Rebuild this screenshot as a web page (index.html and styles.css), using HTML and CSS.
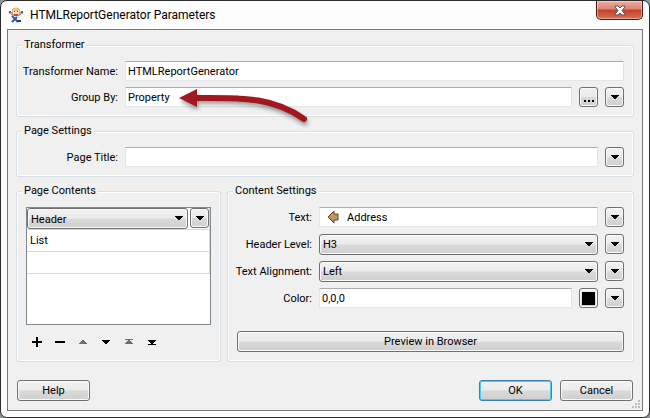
FILE: index.html
```
<!DOCTYPE html>
<html lang="en">
<head>
    <meta charset="UTF-8">
    <title>HTMLReportGenerator Parameters</title>
    <link rel="stylesheet" href="styles.css">
</head>
<body>

<!-- shared arrow shapes -->
<svg class="defs" width="0" height="0">
    <symbol id="down" viewBox="0 0 8 4"><path d="M0 0h8v1h-1v1h-1v1h-1v1h-2v-1h-1v-1h-1v-1h-1z"/></symbol>
</svg>

<form class="window">
    <header class="titlebar">
        <svg class="logo" width="16" height="16" viewBox="0 0 16 16">
            <path d="M1 5l3 2 2 2M15 5l-3 2-2 2" fill="none" stroke="#a39a96" stroke-width="2"/>
            <path d="M1 4h2v2H1zM13 4h2v2h-2z" fill="#6b5f5c"/>
            <circle cx="8" cy="5" r="4" fill="#f6e3c8" stroke="#b5a08c"/>
            <path d="M4 4c1-4 7-4 8 0z" fill="#f0c869"/>
            <path d="M6 4h1v1H6zM9 4h1v1H9z" fill="#444"/>
            <path d="M6 7h4v2H6z" fill="#d8432e"/>
            <path d="M4 9l6 6M9 10l-5 5" fill="none" stroke="#2a5cb8" stroke-width="2"/>
            <path d="M9 13h4v2H9z" fill="#1f3f86"/>
        </svg>
        <h1>HTMLReportGenerator Parameters</h1>
        <button type="button" class="close" aria-label="Close">
            <svg width="12" height="11" viewBox="0 0 12 11"><path d="M1 1h3l2 2 2-2h3v1L8 5.500 11 9v1H8L6 8l-2 2H1V9l3-3.500L1 2z" fill="#fff" stroke="#54545f"/></svg>
        </button>
    </header>

    <main class="content">
        <fieldset>
            <legend>Transformer</legend>
            <div class="row">
                <label for="name">Transformer Name:</label>
                <input type="text" id="name" value="HTMLReportGenerator">
            </div>
            <div class="row">
                <label for="group">Group By:</label>
                <input type="text" id="group" value="Property">
                <button type="button" class="tool" aria-label="Browse"><svg width="11" height="13" viewBox="0 0 11 13"><path d="M1 9h2v2H1zM5 9h2v2H5zM9 9h2v2H9z"/></svg></button>
                <button type="button" class="tool" aria-label="Group By options"><svg width="8" height="4"><use href="#down"/></svg></button>
                <svg class="pointer" width="140" height="50" viewBox="0 0 140 50">
                    <path d="M24 17C62 17 94 16 125 38" fill="none" stroke="#a1181f" stroke-width="6" stroke-linecap="round"/>
                    <path d="M0 17L18 8v18z" fill="#a1181f"/>
                    <path d="M16 14h10v6H16z" fill="#a1181f"/>
                </svg>
            </div>
        </fieldset>

        <fieldset>
            <legend>Page Settings</legend>
            <div class="row">
                <label for="title">Page Title:</label>
                <input type="text" id="title">
                <button type="button" class="tool" aria-label="Page Title options"><svg width="8" height="4"><use href="#down"/></svg></button>
            </div>
        </fieldset>

        <div class="columns">
            <fieldset>
                <legend>Page Contents</legend>
                <div class="list">
                    <div class="item current">
                        <span class="select">
                            <select aria-label="Content type"><option>Header</option></select>
                            <svg width="8" height="4"><use href="#down"/></svg>
                        </span>
                        <button type="button" class="tool" aria-label="Content options"><svg width="8" height="4"><use href="#down"/></svg></button>
                    </div>
                    <div class="item">List</div>
                    <div class="item"></div>
                </div>
                <div class="actions">
                    <button type="button" aria-label="Add"><svg width="11" height="11"><path d="M0 5h10v2H0zM4 1h2v10H4z"/></svg></button>
                    <button type="button" aria-label="Remove"><svg width="11" height="11"><path d="M0 5h10v2H0z"/></svg></button>
                    <button type="button" aria-label="Move up" disabled><svg width="11" height="11"><path d="M1 8h8v-1h-1v-1h-1v-1h-1v-1h-2v1h-1v1h-1v1h-1z"/></svg></button>
                    <button type="button" aria-label="Move down"><svg width="11" height="11"><path d="M1 4h8v1h-1v1h-1v1h-1v1h-2v-1h-1v-1h-1v-1h-1z"/></svg></button>
                    <button type="button" aria-label="Move to top" disabled><svg width="11" height="11"><path d="M1 3h8v1H1zM1 8h8v-1h-1v-1h-1v-1h-1v-1h-2v1h-1v1h-1v1h-1z"/></svg></button>
                    <button type="button" aria-label="Move to bottom"><svg width="11" height="11"><path d="M1 4h8v1h-1v1h-1v1h-1v1h-2v-1h-1v-1h-1v-1h-1zM1 8h8v1H1z"/></svg></button>
                </div>
            </fieldset>

            <fieldset class="settings">
                <legend>Content Settings</legend>
                <div class="row">
                    <label for="text">Text:</label>
                    <span class="attribute">
                        <svg width="12" height="14" viewBox="0 0 12 14"><path d="M1 7l6-6v3h4v6H7v3z" fill="#c2935a" stroke="#5b4630"/></svg>
                        <input type="text" id="text" value="Address">
                    </span>
                    <button type="button" class="tool" aria-label="Text options"><svg width="8" height="4"><use href="#down"/></svg></button>
                </div>
                <div class="row">
                    <label for="level">Header Level:</label>
                    <span class="select">
                        <select id="level"><option>H3</option></select>
                        <svg width="8" height="4"><use href="#down"/></svg>
                    </span>
                    <button type="button" class="tool" aria-label="Header Level options"><svg width="8" height="4"><use href="#down"/></svg></button>
                </div>
                <div class="row">
                    <label for="align">Text Alignment:</label>
                    <span class="select">
                        <select id="align"><option>Left</option></select>
                        <svg width="8" height="4"><use href="#down"/></svg>
                    </span>
                    <button type="button" class="tool" aria-label="Text Alignment options"><svg width="8" height="4"><use href="#down"/></svg></button>
                </div>
                <div class="row">
                    <label for="color">Color:</label>
                    <input type="text" id="color" value="0,0,0">
                    <button type="button" class="tool" aria-label="Pick color"><svg width="13" height="13"><path d="M0 0h13v13H0z"/></svg></button>
                    <button type="button" class="tool" aria-label="Color options"><svg width="8" height="4"><use href="#down"/></svg></button>
                </div>
                <button type="button" class="btn preview">Preview in Browser</button>
            </fieldset>
        </div>

        <footer>
            <button type="button" class="btn">Help</button>
            <button type="submit" class="btn ok">OK</button>
            <button type="button" class="btn">Cancel</button>
        </footer>
        <svg class="grip" width="8" height="8"><path d="M6 0h2v2H6zM3 3h2v2H3zM6 3h2v2H6zM0 6h2v2H0zM3 6h2v2H3zM6 6h2v2H6z" fill="#bdbdbd"/></svg>
    </main>
</form>

</body>
</html>
```
FILE: styles.css
```
*{
    box-sizing: border-box;
}
body{
    margin: 0;
    background: #8f9395;
    color: #000;
    font: 11px/14px Roboto, "Liberation Sans", sans-serif;
}
.defs{
    position: absolute;
}
.window{
    padding: 0 6px 6px;
    border: 1px solid #2b2b2b;
    border-radius: 7px;
    background: #fdfdfd;
}
.titlebar{
    display: flex;
    align-items: flex-start;
    height: 28px;
}
.logo{
    margin: 6px 6px 0 1px;
}
h1{
    flex: 1;
    margin: 6px 0 0;
    font: 12px/16px Roboto, "Liberation Sans", sans-serif;
}
.close{
    display: flex;
    align-items: center;
    justify-content: center;
    width: 47px;
    height: 19px;
    padding: 0;
    border: 1px solid #4c1a17;
    border-top: 0;
    border-radius: 0 0 5px 5px;
    background: linear-gradient(#eeb0a2, #dc8370 45%, #c1402a 50%, #d97055);
    box-shadow: inset 0 0 0 1px rgba(255,255,255,0.4);
}
.content{
    position: relative;
    padding: 8px 8px 9px;
    border: 1px solid #777;
    background: #f0f0f0;
}
fieldset{
    min-width: 0;
    margin: 0 0 7px;
    padding: 9px;
    border: 1px solid #d5dfe5;
    border-radius: 3px;
    box-shadow: inset 0 0 0 1px #fff;
}
legend{
    margin-left: -4px;
    padding: 0 2px;
    background: #f0f0f0;
}
.row{
    display: flex;
    position: relative;
    gap: 7px;
    height: 20px;
}
.row + .row{
    margin-top: 6px;
}
label{
    display: flex;
    justify-content: flex-end;
    width: 92px;
    line-height: 22px;
    white-space: nowrap;
}
input{
    flex: 1;
    min-width: 0;
    height: 20px;
    padding: 1px 2px 0;
    border: 1px solid #e2e6ea;
    border-top-color: #abadb3;
    border-radius: 1px;
    background: #fff;
    font: inherit;
}
.tool{
    display: flex;
    flex: none;
    align-items: center;
    justify-content: center;
    width: 19px;
    height: 20px;
    padding: 0;
}
.tool, .btn, select{
    border: 1px solid #707070;
    border-radius: 3px;
    background: linear-gradient(#f2f2f2, #ebebeb 48%, #dadada 52%, #cfcfcf);
    box-shadow: inset 0 0 0 1px #fafafa;
    color: #000;
    font: inherit;
}
.pointer{
    position: absolute;
    top: -6px;
    left: 153px;
    filter: drop-shadow(1px 3px 2px rgba(0,0,0,0.4));
}
.select{
    display: flex;
    flex: 1;
    position: relative;
}
.select svg{
    position: absolute;
    top: 8px;
    right: 5px;
    pointer-events: none;
}
select{
    appearance: none;
    width: 100%;
    height: 21px;
    padding: 0 3px;
}
.columns{
    display: grid;
    grid-template-columns: minmax(205px, 1fr) 2fr;
    gap: 6px;
}
.columns fieldset{
    margin-bottom: 18px;
}
.settings .row{
    height: 21px;
}
.settings label{
    width: 75px;
}
.attribute{
    display: flex;
    flex: 1;
    align-items: center;
    height: 20px;
    padding-left: 7px;
    border: 1px solid #e2e6ea;
    border-top-color: #abadb3;
    background: #fff;
}
.attribute input{
    height: 18px;
    padding-left: 8px;
    border: 0;
}
.list{
    height: 118px;
    border: 1px solid #828790;
    background: #fff;
}
.item{
    height: 22px;
    padding: 0 3px;
    border: solid #d8d8d8;
    border-width: 0 1px 1px 0;
    line-height: 22px;
}
.item.current{
    display: flex;
    gap: 2px;
    padding: 0;
}
.actions{
    display: flex;
    padding: 11px 0 0 6px;
}
.actions button{
    display: flex;
    width: 23px;
    padding: 0;
    border: 0;
    background: none;
}
.actions button:disabled{
    fill: #6d6d6d;
}
.btn{
    width: 73px;
    height: 21px;
    padding: 0;
}
.preview{
    display: block;
    width: 100%;
    margin-top: 22px;
}
footer{
    display: flex;
    gap: 8px;
    padding: 0 1px;
}
.ok{
    margin-left: auto;
    border-color: #3c7fb1;
    box-shadow: inset 0 0 0 1px #46d0f7;
}
.grip{
    position: absolute;
    right: 2px;
    bottom: 2px;
}
```
